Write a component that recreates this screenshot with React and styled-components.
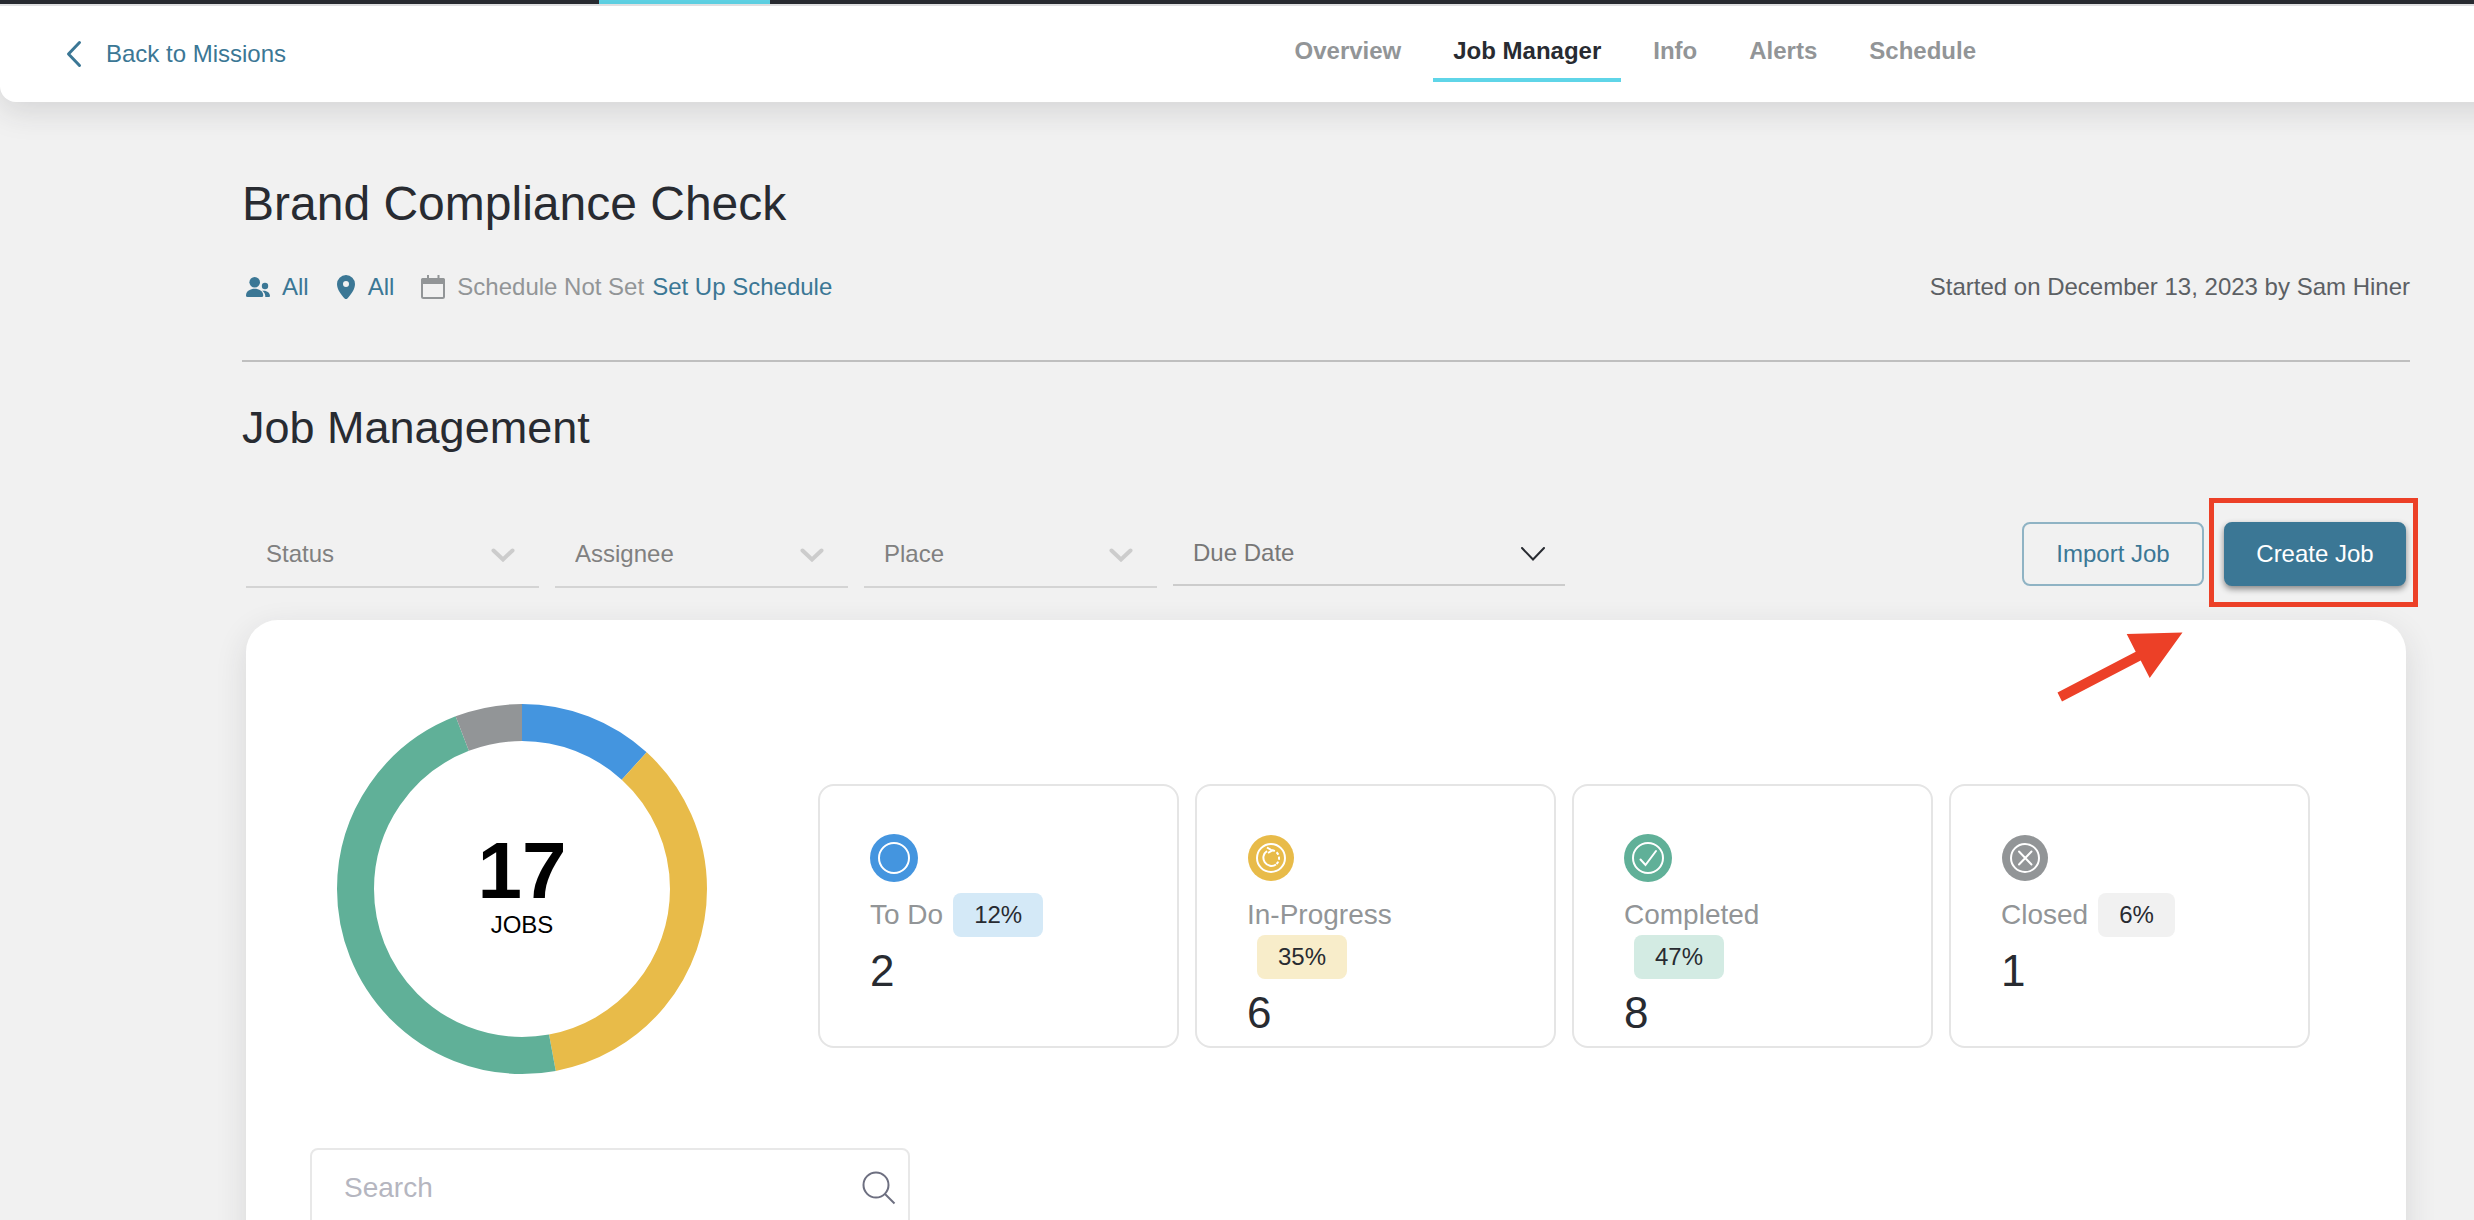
import styled, { createGlobalStyle } from "styled-components";

const tabs = ["Overview", "Job Manager", "Info", "Alerts", "Schedule"];

const filters = ["Status", "Assignee", "Place"];

const stats = [
  { key: "todo", label: "To Do", count: 2, percent: "12%", color: "#4495df", badge: "#d4e9f7" },
  { key: "progress", label: "In-Progress", count: 6, percent: "35%", color: "#e8bb49", badge: "#f8edca" },
  { key: "completed", label: "Completed", count: 8, percent: "47%", color: "#60b098", badge: "#d3ebe3" },
  { key: "closed", label: "Closed", count: 1, percent: "6%", color: "#929597", badge: "#f1f1f1" },
];

const total = stats.reduce((sum, stat) => sum + stat.count, 0);

function StatIcon({ type, color }) {
  const large = type === "todo" || type === "completed";
  return (
    <IconCircle viewBox="0 0 48 48" aria-hidden="true">
      <circle cx="24" cy="24" r={large ? 24 : 23} fill={color} />
      <g fill="none" stroke="#fff" strokeWidth="2" strokeLinecap="round">
        <circle cx="24" cy="24" r={large ? 15 : 14} />
        {type === "progress" && (
          <g strokeLinecap="butt">
            <path d="M20 17A8 8 0 1 0 29 30.500" />
            <path d="M25 16.200A8 8 0 0 1 29.500 30" strokeDasharray="3 2" />
            <path d="M20 13.500L25 16.500L21 19" />
          </g>
        )}
        {type === "completed" && <path d="M16.5 25.5L21.5 31L32 17" />}
        {type === "closed" && <path d="M18 17.5L30.5 30.5M30.5 17.5L18 30.5" />}
      </g>
    </IconCircle>
  );
}

function Donut() {
  const radius = 166.5;
  const length = 2 * Math.PI * radius;
  let start = 0;

  return (
    <DonutChart viewBox="0 0 370 370" role="img" aria-label={`${total} jobs`}>
      <g transform="rotate(-90 185 185)">
        {stats.map((stat) => {
          const part = (stat.count / total) * length;
          const offset = -start;
          start += part;
          return (
            <circle
              key={stat.key}
              cx="185"
              cy="185"
              r={radius}
              fill="none"
              stroke={stat.color}
              strokeWidth="37"
              strokeDasharray={`${part} ${length - part}`}
              strokeDashoffset={offset}
            />
          );
        })}
      </g>
      <DonutTotal x="185" y="194">
        {total}
      </DonutTotal>
      <DonutLabel x="185" y="229">
        JOBS
      </DonutLabel>
    </DonutChart>
  );
}

function Filter({ label, wide }) {
  const id = label.toLowerCase().replace(" ", "-");
  return (
    <FilterBox $wide={wide}>
      <HiddenLabel htmlFor={id}>{label}</HiddenLabel>
      <Select id={id} $wide={wide} defaultValue="">
        <option value="">{label}</option>
      </Select>
      <Chevron viewBox="0 0 24 14" $wide={wide} aria-hidden="true">
        {wide ? <path d="M1 1L12 12.5L23 1" /> : <path d="M2.5 2.5L12 11.5L21.5 2.5" />}
      </Chevron>
    </FilterBox>
  );
}

function App() {
  return (
    <Page>
      <GlobalStyle />
      <TopBar>
        <TopMarker />
      </TopBar>
      <Header>
        <BackLink href="#missions">
          <svg width="16" height="28" viewBox="0 0 16 28" aria-hidden="true">
            <path d="M13.5 2.5L2.5 14L13.5 25.5" fill="none" stroke="#3b7795" strokeWidth="3" strokeLinecap="round" strokeLinejoin="round" />
          </svg>
          Back to Missions
        </BackLink>
        <Nav>
          {tabs.map((tab) => (
            <Tab key={tab} href={`#${tab}`} $active={tab === "Job Manager"}>
              {tab}
            </Tab>
          ))}
        </Nav>
      </Header>

      <Main>
        <Title>Brand Compliance Check</Title>
        <Meta>
          <MetaLink href="#people">
            <svg width="24" height="24" viewBox="0 0 24 24" fill="currentColor" aria-hidden="true">
              <circle cx="8.7" cy="7.3" r="5.3" />
              <path d="M0 20.5C0 16 4.5 13.8 8.7 13.8S17.2 16 17.2 20.5Q17.2 22 15.7 22H1.5Q0 22 0 20.5Z" />
              <circle cx="19" cy="11" r="3.2" />
              <path d="M16.2 15.8C20.5 15 24 17.5 24 21Q24 22 23 22H19.3C19.5 19.5 18.5 17.3 16.2 15.8Z" />
            </svg>
            All
          </MetaLink>
          <MetaLink href="#places">
            <svg width="20" height="24" viewBox="0 0 20 24" fill="currentColor" aria-hidden="true">
              <path
                fillRule="evenodd"
                d="M10 0A9 9 0 0 0 1 9C1 14.5 5 19.5 8.600 23.4Q10 24.6 11.4 23.4C15 19.5 19 14.5 19 9A9 9 0 0 0 10 0ZM10 6A3 3 0 1 1 10 12A3 3 0 0 1 10 6Z"
              />
            </svg>
            All
          </MetaLink>
          <MetaText>
            <svg width="24" height="24" viewBox="0 0 24 24" aria-hidden="true">
              <rect x="1" y="4" width="22" height="19" rx="1.5" fill="none" stroke="currentColor" strokeWidth="2" />
              <path d="M0 5Q0 3 2 3H5V5H8V3H16V5H19V3H22Q24 3 24 5V9H0Z" fill="currentColor" />
              <path d="M7 0V5M17.500 0V5" stroke="currentColor" strokeWidth="2" />
            </svg>
            Schedule Not Set
          </MetaText>
          <SetUpLink href="#schedule">Set Up Schedule</SetUpLink>
          <Started>Started on December 13, 2023 by Sam Hiner</Started>
        </Meta>
        <Divider />

        <SubTitle>Job Management</SubTitle>
        <Toolbar>
          {filters.map((label) => (
            <Filter key={label} label={label} />
          ))}
          <Filter label="Due Date" wide />
          <Actions>
            <Button>Import Job</Button>
            <Highlight>
              <Button $primary>Create Job</Button>
              <Arrow viewBox="0 0 128 72" aria-hidden="true">
                <path d="M1.500 61.500L79.700 20.700L70.700 3L126.500 1.500L93.700 47L84.700 29.500L6 70.500Z" fill="#ec4027" />
              </Arrow>
            </Highlight>
          </Actions>
        </Toolbar>

        <Card>
          <Summary>
            <Donut />
            <Stats>
              {stats.map((stat) => (
                <Stat key={stat.key}>
                  <StatIcon type={stat.key} color={stat.color} />
                  <StatHead>
                    <StatLabel>{stat.label}</StatLabel>
                    <Badge $color={stat.badge}>{stat.percent}</Badge>
                  </StatHead>
                  <StatCount>{stat.count}</StatCount>
                </Stat>
              ))}
            </Stats>
          </Summary>
          <SearchBox>
            <SearchInput type="search" placeholder="Search" aria-label="Search" />
            <svg width="34" height="34" viewBox="0 0 34 34" fill="none" stroke="#6d6f80" strokeWidth="2" aria-hidden="true">
              <circle cx="14" cy="14" r="12.5" />
              <path d="M23 23L32.500 32.500" />
            </svg>
          </SearchBox>
        </Card>
      </Main>
    </Page>
  );
}

const GlobalStyle = createGlobalStyle`
  * {
    box-sizing: border-box;
  }

  body {
    margin: 0;
    background-color: #f1f1f1;
    color: #282b31;
    font-family: "Liberation Sans", Arial, sans-serif;
    font-size: 24px;
    line-height: 28px;
  }

  a {
    text-decoration: none;
  }

  button, input, select {
    font: inherit;
  }
`;

const Page = styled.div`
  height: 100vh;
  overflow: hidden;
`;

const TopBar = styled.div`
  height: 6px;
  padding-left: 599px;
  background-color: #282b31;
  border-bottom: 2px solid #e8e9ea;
`;

const TopMarker = styled.div`
  width: 171px;
  height: 4px;
  background-color: #5fd5e8;
`;

const Header = styled.header`
  display: flex;
  align-items: center;
  justify-content: space-between;
  height: 96px;
  margin-right: -40px;
  padding: 0 518px 0 66px;
  background-color: #fff;
  border-radius: 0 0 0 16px;
  box-shadow: 0 8px 32px rgba(40, 43, 49, 0.15);
`;

const BackLink = styled.a`
  display: flex;
  align-items: center;
  gap: 24px;
  color: #3b7795;
`;

const Nav = styled.nav`
  display: flex;
  gap: 12px;
`;

const Tab = styled.a`
  padding: 11px 20px 13px;
  border-bottom: 4px solid ${(props) => (props.$active ? "#5fd5e8" : "transparent")};
  color: ${(props) => (props.$active ? "#282b31" : "#929597")};
  font-weight: bold;
`;

const Main = styled.main`
  padding: 74px 64px 0 242px;
`;

const Title = styled.h1`
  margin: 0;
  font-size: 48px;
  font-weight: normal;
  line-height: 56px;
`;

const Meta = styled.div`
  display: flex;
  align-items: center;
  margin-top: 41px;
  padding-left: 4px;
`;

const MetaLink = styled.a`
  display: flex;
  align-items: center;
  gap: 12px;
  margin-right: 27px;
  color: #3b7795;
`;

const MetaText = styled.span`
  display: flex;
  align-items: center;
  gap: 12px;
  color: #929597;
`;

const SetUpLink = styled.a`
  margin-left: 8px;
  color: #3b7795;
`;

const Started = styled.span`
  margin-left: auto;
  color: #5c6064;
`;

const Divider = styled.hr`
  margin: 59px 0 40px;
  border: 0;
  border-top: 2px solid #bfbfbf;
`;

const SubTitle = styled.h2`
  margin: 0;
  font-size: 45px;
  font-weight: normal;
  line-height: 52px;
`;

const Toolbar = styled.div`
  display: flex;
  align-items: flex-start;
  gap: 16px;
  margin-top: 68px;
  padding: 0 4px;
`;

const FilterBox = styled.div`
  display: grid;
  align-items: center;
  width: ${(props) => (props.$wide ? 392 : 293)}px;

  > * {
    grid-area: 1 / 1;
  }
`;

const HiddenLabel = styled.label`
  width: 1px;
  height: 1px;
  overflow: hidden;
  opacity: 0;
`;

const Select = styled.select`
  width: 100%;
  height: ${(props) => (props.$wide ? 64 : 66)}px;
  padding: 0 20px;
  appearance: none;
  background: none;
  border: 0;
  border-bottom: 2px solid ${(props) => (props.$wide ? "#cccccc" : "#d4d4d4")};
  border-radius: 0;
  color: ${(props) => (props.$wide ? "#777777" : "#808080")};
`;

const Chevron = styled.svg`
  justify-self: end;
  width: 24px;
  height: 14px;
  margin-right: ${(props) => (props.$wide ? 20 : 24)}px;
  fill: none;
  stroke: ${(props) => (props.$wide ? "#282b31" : "#cccccc")};
  stroke-width: ${(props) => (props.$wide ? 2 : 4)}px;
  stroke-linecap: round;
  pointer-events: none;
`;

const Actions = styled.div`
  display: flex;
  gap: 20px;
  margin-left: auto;
`;

const Button = styled.button`
  width: 182px;
  height: 64px;
  padding: 0;
  background-color: ${(props) => (props.$primary ? "#3b7795" : "transparent")};
  border: 2px solid ${(props) => (props.$primary ? "#3b7795" : "#8fb3c4")};
  border-radius: 8px;
  box-shadow: ${(props) => (props.$primary ? "0 3px 6px rgba(0, 0, 0, 0.45)" : "none")};
  color: ${(props) => (props.$primary ? "#fff" : "#3b7795")};
  cursor: pointer;
`;

const Highlight = styled.div`
  position: relative;

  &::after {
    content: "";
    position: absolute;
    top: -24px;
    right: -12px;
    bottom: -21px;
    left: -15px;
    border: 5px solid #ec4027;
    pointer-events: none;
  }
`;

const Arrow = styled.svg`
  position: absolute;
  top: 109px;
  left: -168px;
  width: 128px;
  height: 72px;
`;

const Card = styled.section`
  margin: 32px 4px 0;
  padding: 84px 96px 64px 64px;
  background-color: #fff;
  border-radius: 32px;
  box-shadow: 0 10px 32px rgba(40, 43, 49, 0.12);
`;

const Summary = styled.div`
  display: flex;
  align-items: flex-start;
  gap: 111px;
  padding-left: 27px;
`;

const DonutChart = styled.svg`
  flex: none;
  width: 370px;
  height: 370px;
`;

const DonutTotal = styled.text`
  font-size: 80px;
  font-weight: bold;
  text-anchor: middle;
  fill: #000;
`;

const DonutLabel = styled.text`
  font-size: 24px;
  text-anchor: middle;
  fill: #000;
`;

const Stats = styled.div`
  display: grid;
  flex: 1;
  grid-template-columns: repeat(4, 1fr);
  gap: 16px;
  margin-top: 80px;
`;

const Stat = styled.div`
  padding: 48px 50px 8px;
  border: 2px solid #e5e5e5;
  border-radius: 16px;
`;

const IconCircle = styled.svg`
  display: block;
  width: 48px;
  height: 48px;
`;

const StatHead = styled.div`
  display: flex;
  flex-wrap: wrap;
  max-width: 220px;
  margin-top: 12px;
`;

const StatLabel = styled.span`
  color: #929597;
  font-size: 28px;
  line-height: 42px;
`;

const Badge = styled.span`
  margin: -1px 0 -1px 10px;
  padding: 0 21px;
  background-color: ${(props) => props.$color};
  border-radius: 8px;
  line-height: 44px;
`;

const StatCount = styled.div`
  margin-top: 10px;
  font-size: 44px;
  line-height: 50px;
`;

const SearchBox = styled.div`
  display: flex;
  align-items: center;
  width: 600px;
  height: 80px;
  margin-top: 74px;
  padding: 0 12px 0 32px;
  border: 2px solid #e8e8e8;
  border-radius: 8px;
`;

const SearchInput = styled.input`
  flex: 1;
  padding: 0;
  background: none;
  border: 0;
  outline: none;
  font-size: 28px;

  &::placeholder {
    color: #b5b6c0;
  }
`;

export default App;
